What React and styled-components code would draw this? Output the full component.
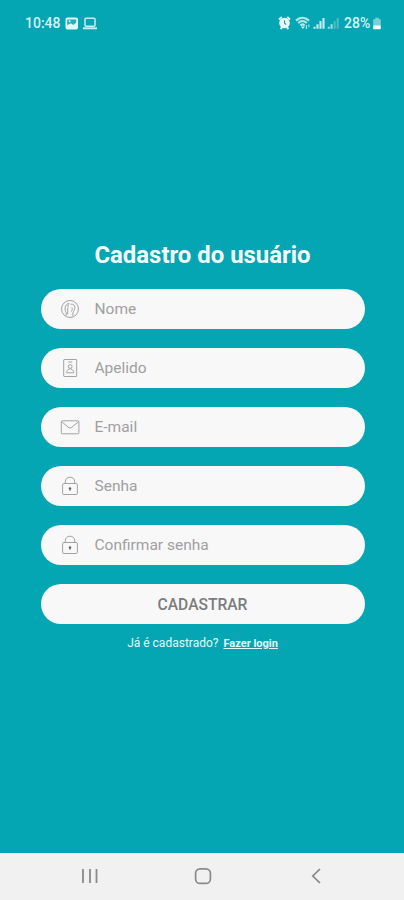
import styled, { createGlobalStyle } from "styled-components";

const fields = [
  { name: "nome", label: "Nome", type: "text", Icon: UserIcon },
  { name: "apelido", label: "Apelido", type: "text", Icon: BadgeIcon },
  { name: "email", label: "E-mail", type: "email", Icon: MailIcon },
  { name: "senha", label: "Senha", type: "password", Icon: LockIcon },
  {
    name: "confirmar",
    label: "Confirmar senha",
    type: "password",
    Icon: LockIcon,
  },
];

export default function App() {
  return (
    <Screen>
      <GlobalStyle />
      <StatusBar>
        <StatusGroup>
          <StatusText $width={36}>10:48</StatusText>
          <PictureIcon />
          <LaptopIcon />
        </StatusGroup>
        <StatusGroup>
          <StatusIcons />
          <StatusText $width={28}>28%</StatusText>
          <BatteryIcon />
        </StatusGroup>
      </StatusBar>

      <Form onSubmit={(e) => e.preventDefault()}>
        <Title>Cadastro do usuário</Title>
        {fields.map(({ name, label, type, Icon }) => (
          <Field key={name}>
            <Icon />
            <Input name={name} type={type} placeholder={label} />
          </Field>
        ))}
        <Button type="submit">CADASTRAR</Button>
        <Footer>
          Já é cadastrado? <Link href="#login">Fazer login</Link>
        </Footer>
      </Form>

      <NavBar>
        <svg width="18" height="18" viewBox="0 0 18 18">
          <path
            d="M2 2v14M9 2v14M15.5 2v14"
            stroke="#8a8a8a"
            strokeWidth="1.8"
          />
        </svg>
        <svg width="18" height="18" viewBox="0 0 18 18" fill="none">
          <rect
            x="1.6"
            y="1.8"
            width="14.8"
            height="14.6"
            rx="4.5"
            stroke="#8a8a8a"
            strokeWidth="1.7"
          />
        </svg>
        <svg width="18" height="18" viewBox="0 0 18 18" fill="none">
          <path d="M13 2L5.8 9l7.2 7" stroke="#858585" strokeWidth="1.7" />
        </svg>
      </NavBar>
    </Screen>
  );
}

function UserIcon() {
  return (
    <FieldIcon viewBox="0 0 20 20">
      <circle cx="10" cy="10" r="8.5" />
      <path d="M6.2 16.8v-3.2c-1-1.3-1.3-3-1-4.8.3-2.4 1.8-4.2 3.8-4.4M9 4.4c-1 1.4-1.2 2.6-.8 4M10.5 5.2c2.6-.5 4.4 1 4.4 3.6 0 2.2-1.4 3.4-2 5v3.4M7.7 8.8v6.4M12 8.4c.4 1.6.2 3-.6 4.2" />
    </FieldIcon>
  );
}

function BadgeIcon() {
  return (
    <FieldIcon viewBox="0 0 20 20">
      <rect x="3.7" y="1.5" width="13" height="17" rx="0.6" />
      <path d="M8.2 4h4M6.8 14.8h6.8v-1.2c0-1.2-1.2-1.8-2.4-2.2v-1M6.8 14.8v-1.2c0-1.2 1.2-1.8 2.4-2.2v-1" />
      <circle cx="10.2" cy="8.5" r="1.9" />
    </FieldIcon>
  );
}

function MailIcon() {
  return (
    <FieldIcon viewBox="0 0 20 20">
      <rect x="1.3" y="3.8" width="17.6" height="13" rx="1" />
      <path d="M2 5l7 5.7c.7.5 1.5.5 2.2 0L18.2 5" />
    </FieldIcon>
  );
}

function LockIcon() {
  return (
    <FieldIcon viewBox="0 0 20 20">
      <rect x="2.6" y="7.5" width="14.8" height="11" rx="1.2" />
      <path d="M5.3 7.5V5.8C5.3 3 7.2 1.2 10 1.2s4.7 1.8 4.7 4.6v1.7" />
      <path d="M10 12v2.8" stroke="#5f5f5f" strokeWidth="1.1" />
      <circle cx="10" cy="12.4" r="1.2" fill="#5f5f5f" stroke="none" />
    </FieldIcon>
  );
}

function PictureIcon() {
  return (
    <svg width="14" height="13" viewBox="0 0 14 13">
      <rect x="0.5" y="0.5" width="12.5" height="12" rx="2" fill="#e0f7f8" />
      <path d="M2.2 8.2V2.4h9v3.2L8.4 8 5.8 6.2z" fill="#27adb7" />
      <circle cx="4.6" cy="4.3" r="1" fill="#e0f7f8" />
    </svg>
  );
}

function LaptopIcon() {
  return (
    <svg width="14" height="13" viewBox="0 0 14 13" fill="none">
      <rect
        x="2"
        y="1.2"
        width="10"
        height="8"
        rx="1"
        stroke="#c4eff2"
        strokeWidth="1.5"
      />
      <path d="M0 11.3h14" stroke="#c4eff2" strokeWidth="2" />
    </svg>
  );
}

// alarm, wifi and the two sim signals
function StatusIcons() {
  return (
    <svg width="62" height="14" viewBox="0 0 62 14" fill="none">
      <path
        d="M1 3.4L3.8 1M12 3.4L9.2 1M2.6 13l1.6-1.8M10.4 13l-1.6-1.8"
        stroke="#e6fafa"
        strokeWidth="2"
      />
      <circle cx="6.5" cy="7" r="5.3" fill="#effcfc" />
      <path d="M6.5 4.3v3l1.6 1.2" stroke="#139fab" strokeWidth="1.1" />
      <path
        d="M18 4.6c4-3.6 9-3.6 13 0M20.2 7c2.7-2.5 5.9-2.5 8.6 0M22.4 9.4c1.3-1.2 2.9-1.2 4.2 0"
        stroke="#b4e8eb"
        strokeWidth="2.1"
      />
      <path d="M24.9 13l-2-2.6h4z" fill="#e6fafa" />
      <path d="M28.4 9v4M30.8 8.4v2.8" stroke="#a5e0e4" strokeWidth="1.2" />
      <path
        d="M36.5 12.8v-2M39.5 12.8V8.2M42.5 12.8V5M45.5 12.8V2"
        stroke="#c8f0f2"
        strokeWidth="2.1"
      />
      <path d="M50.7 12.8v-2M53.6 12.8V8.2" stroke="#a5e0e4" strokeWidth="2" />
      <path d="M56.7 12.8V5M59.7 12.8V2" stroke="#4dbdc5" strokeWidth="2" />
    </svg>
  );
}

function BatteryIcon() {
  return (
    <svg width="10" height="13" viewBox="0 0 10 13">
      <path d="M3.2 0.8h3.6v1.4h2v7H1.2v-7h2z" fill="#7ccfd5" />
      <rect x="1.2" y="8.4" width="7.6" height="3.8" rx="0.6" fill="#fff" />
    </svg>
  );
}

const GlobalStyle = createGlobalStyle`
  * {
    box-sizing: border-box;
  }

  body {
    margin: 0;
    font-family: Roboto, sans-serif;
  }
`;

const Screen = styled.div`
  display: flex;
  flex-direction: column;
  width: 100%;
  height: 900px;
  background-color: #03a6b2;
`;

const StatusBar = styled.header`
  display: flex;
  justify-content: space-between;
  align-items: center;
  height: 46px;
  padding: 0 22px 0 25px;
`;

const StatusGroup = styled.div`
  display: flex;
  align-items: center;
  gap: 4px;

  & > span + svg:last-child {
    margin-left: -4px;
  }
`;

const StatusText = styled.span`
  width: ${(props) => props.$width}px;
  font-size: 14px;
  font-weight: 500;
  line-height: 18px;
  white-space: nowrap;
  color: #d6f4f6;
`;

const Form = styled.form`
  flex: 1;
  display: flex;
  flex-direction: column;
  align-items: center;
  gap: 19px;
  padding: 195px 39px 0 40px;
`;

const Title = styled.h1`
  margin: 0;
  font-size: 23.9px;
  font-weight: 700;
  line-height: 29px;
  color: #f6ffff;
`;

const Field = styled.label`
  display: flex;
  align-items: center;
  width: 324px;
  height: 40px;
  padding: 0 20px 0 19px;
  border-radius: 20px;
  background-color: #f8f8f8;
`;

const FieldIcon = styled.svg`
  flex: none;
  width: 20px;
  height: 20px;
  fill: none;
  stroke: #999;
  stroke-width: 0.9;
`;

const Input = styled.input`
  flex: 1;
  min-width: 0;
  margin-left: 15px;
  padding: 0;
  border: 0;
  outline: 0;
  background: transparent;
  font-family: inherit;
  font-size: 15.5px;
  color: #777;

  &::placeholder {
    color: #a0a0a0;
    opacity: 1;
  }
`;

const Button = styled.button`
  width: 324px;
  height: 40px;
  padding: 1px 0 0;
  border: 0;
  border-radius: 20px;
  background-color: #f8f8f8;
  font-family: inherit;
  font-size: 15.6px;
  font-weight: 500;
  color: #7c7c7c;
  cursor: pointer;
`;

const Footer = styled.p`
  margin: -7px 0 0;
  font-size: 12px;
  line-height: 14px;
  color: #e3f8f9;
`;

const Link = styled.a`
  margin-left: 2px;
  font-size: 11px;
  font-weight: 700;
  color: #e3f8f9;
`;

const NavBar = styled.nav`
  display: flex;
  justify-content: center;
  align-items: center;
  gap: 95px;
  height: 47px;
  padding: 0 0 2px 2px;
  background-color: #f1f1f1;
`;
